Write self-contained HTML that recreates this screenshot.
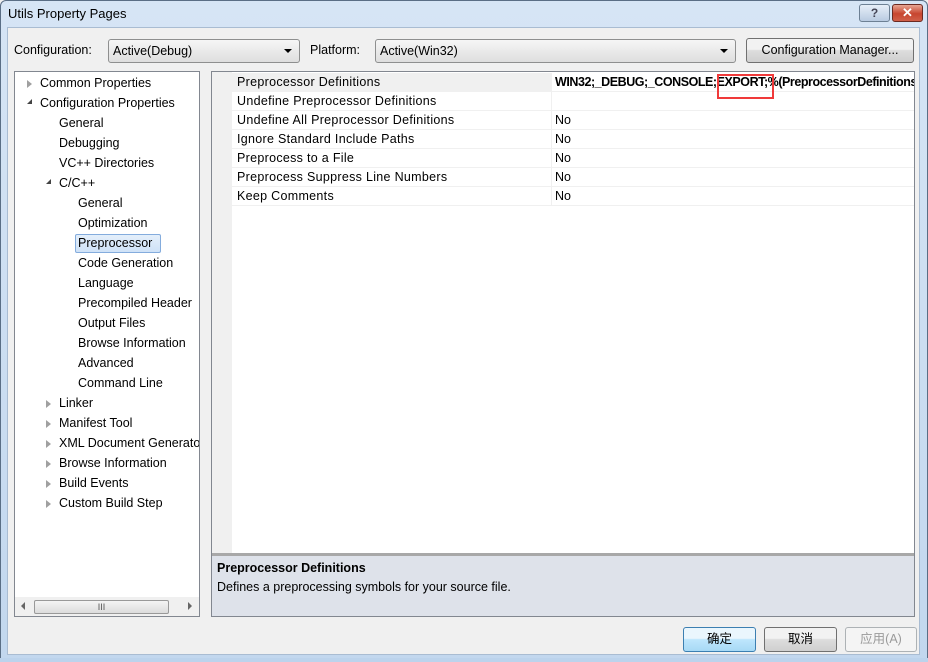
<!DOCTYPE html>
<html><head><meta charset="utf-8"><style>
*{margin:0;padding:0;box-sizing:border-box}
body{width:928px;height:662px;overflow:hidden;background:#f0f0f0;font-family:"Liberation Sans","Noto Sans CJK SC",sans-serif;font-size:12.5px;color:#000;position:relative}
.a{position:absolute;white-space:nowrap}
.frame{position:absolute;left:0;top:0;width:928px;height:662px;border:1px solid #5a6e85;border-radius:6px 6px 0 0;background:linear-gradient(#d6e5f5,#c2d7ee);}
.inner{position:absolute;left:7px;top:27px;width:913px;height:628px;background:#f0f0f0;border:1px solid #a9bcd2}
.combo{position:absolute;height:24px;border:1px solid #8e8f8f;border-radius:3px;background:linear-gradient(#f6f6f6,#dedede);padding:4px 4px;font-size:12.5px}
.combo::after{content:"";position:absolute;right:7px;top:9px;border-left:4px solid transparent;border-right:4px solid transparent;border-top:4px solid #000}
.btn{position:absolute;height:25px;border:1px solid #707070;border-radius:3px;background:linear-gradient(#f2f2f2 45%,#dddddd 50%,#cfcfcf);text-align:center;line-height:23px;font-size:12.5px}
.panel{position:absolute;background:#fff;border:1px solid #828790}
.t{position:absolute;white-space:nowrap;height:20px;line-height:20px}
.tri{position:absolute;width:0;height:0;border-top:4px solid transparent;border-bottom:4px solid transparent;border-left:5px solid #a0a0a0}
.row{position:absolute;left:20px;width:683px;height:19px;border-bottom:1px solid #f0f0f0;white-space:nowrap}
.row span{position:absolute;left:5px;top:2px;letter-spacing:0.3px}
.row b,.row i{position:absolute;left:323px;top:2px;font-style:normal;white-space:nowrap}
.row b{letter-spacing:-0.45px}
.row::after{content:"";position:absolute;left:319px;top:0;width:1px;height:19px;background:#f0f0f0}
</style></head><body>
<div class="frame"></div>
<div class="a" style="left:8px;top:6px;font-size:13px">Utils Property Pages</div>
<div class="a" style="left:859px;top:4px;width:31px;height:18px;border:1px solid #6d8094;border-radius:3px;background:linear-gradient(#e6eef8,#b9cbe1);text-align:center;font-weight:bold;color:#445;font-size:12px;line-height:16px">?</div>
<div class="a" style="left:892px;top:4px;width:31px;height:18px;border:1px solid #6b2a22;border-radius:3px;background:linear-gradient(#e8a593,#c7452f 55%,#d0604a);text-align:center;font-weight:bold;color:#fff;font-size:13px;line-height:16px">✕</div>
<div class="inner"></div>

<div class="a" style="left:14px;top:43px">Configuration:</div>
<div class="combo" style="left:108px;top:39px;width:192px">Active(Debug)</div>
<div class="a" style="left:310px;top:43px">Platform:</div>
<div class="combo" style="left:375px;top:39px;width:361px">Active(Win32)</div>
<div class="btn" style="left:746px;top:38px;width:168px">Configuration Manager...</div>

<div class="panel" style="left:14px;top:71px;width:186px;height:546px;overflow:hidden">
<div class="tri" style="left:12px;top:8px"></div><div class="t" style="left:25px;top:1px">Common Properties</div>
<div class="a" style="left:12px;top:27px;width:0;height:0;border-left:5px solid transparent;border-bottom:5px solid #444"></div><div class="t" style="left:25px;top:21px">Configuration Properties</div>
<div class="t" style="left:44px;top:41px">General</div>
<div class="t" style="left:44px;top:61px">Debugging</div>
<div class="t" style="left:44px;top:81px">VC++ Directories</div>
<div class="a" style="left:31px;top:107px;width:0;height:0;border-left:5px solid transparent;border-bottom:5px solid #444"></div><div class="t" style="left:44px;top:101px">C/C++</div>
<div class="t" style="left:63px;top:121px">General</div>
<div class="t" style="left:63px;top:141px">Optimization</div>
<div class="a" style="left:60px;top:162px;width:86px;height:19px;border:1px solid #84acdd;border-radius:2px;background:linear-gradient(#e4effb,#cfe2f7)"></div>
<div class="t" style="left:63px;top:161px">Preprocessor</div>
<div class="t" style="left:63px;top:181px">Code Generation</div>
<div class="t" style="left:63px;top:201px">Language</div>
<div class="t" style="left:63px;top:221px">Precompiled Header</div>
<div class="t" style="left:63px;top:241px">Output Files</div>
<div class="t" style="left:63px;top:261px">Browse Information</div>
<div class="t" style="left:63px;top:281px">Advanced</div>
<div class="t" style="left:63px;top:301px">Command Line</div>
<div class="tri" style="left:31px;top:328px"></div><div class="t" style="left:44px;top:321px">Linker</div>
<div class="tri" style="left:31px;top:348px"></div><div class="t" style="left:44px;top:341px">Manifest Tool</div>
<div class="tri" style="left:31px;top:368px"></div><div class="t" style="left:44px;top:361px">XML Document Generator</div>
<div class="tri" style="left:31px;top:388px"></div><div class="t" style="left:44px;top:381px">Browse Information</div>
<div class="tri" style="left:31px;top:408px"></div><div class="t" style="left:44px;top:401px">Build Events</div>
<div class="tri" style="left:31px;top:428px"></div><div class="t" style="left:44px;top:421px">Custom Build Step</div>
<div class="a" style="left:0;top:525px;width:184px;height:19px;background:#f0f0f0"></div>
<div class="a" style="left:6px;top:530px;border-top:4px solid transparent;border-bottom:4px solid transparent;border-right:4px solid #666"></div>
<div class="a" style="left:19px;top:528px;width:135px;height:14px;border:1px solid #999;border-radius:2px;background:linear-gradient(#f4f4f4,#dcdcdc);text-align:center;font-size:9px;line-height:12px;color:#555">III</div>
<div class="a" style="left:173px;top:530px;border-top:4px solid transparent;border-bottom:4px solid transparent;border-left:4px solid #666"></div>
</div>

<div class="panel" style="left:211px;top:71px;width:704px;height:546px;overflow:hidden">
<div class="a" style="left:0;top:0;width:20px;height:484px;background:#f0f0f0"></div>
<div class="row" style="top:1px;background:linear-gradient(90deg,#f0f0f0 319px,#fff 319px)"><span>Preprocessor Definitions</span><b>WIN32;_DEBUG;_CONSOLE;EXPORT;%(PreprocessorDefinitions)</b></div>
<div class="row" style="top:20px"><span>Undefine Preprocessor Definitions</span></div>
<div class="row" style="top:39px"><span>Undefine All Preprocessor Definitions</span><i>No</i></div>
<div class="row" style="top:58px"><span>Ignore Standard Include Paths</span><i>No</i></div>
<div class="row" style="top:77px"><span>Preprocess to a File</span><i>No</i></div>
<div class="row" style="top:96px"><span>Preprocess Suppress Line Numbers</span><i>No</i></div>
<div class="row" style="top:115px"><span>Keep Comments</span><i>No</i></div>
<div class="a" style="left:505px;top:2px;width:57px;height:25px;border:2px solid #f03a3a"></div>
<div class="a" style="left:0;top:481px;width:704px;height:65px;background:#dee2ea;border-top:3px solid #a8a8a8"></div>
<div class="a" style="left:5px;top:489px;font-weight:bold">Preprocessor Definitions</div>
<div class="a" style="left:5px;top:508px">Defines a preprocessing symbols for your source file.</div>
</div>

<div class="btn" style="left:683px;top:627px;width:73px;border-color:#3c7fb1;background:linear-gradient(#eaf6fd 45%,#bee6fd 50%,#a7d9f5)">确定</div>
<div class="btn" style="left:764px;top:627px;width:73px">取消</div>
<div class="btn" style="left:845px;top:627px;width:72px;border-color:#adb2b5;background:#f4f4f4;color:#9a9a9a">应用(A)</div>
<div class="a" style="left:0;top:658px;width:928px;height:4px;background:#bcd3ec"></div>
</body></html>
